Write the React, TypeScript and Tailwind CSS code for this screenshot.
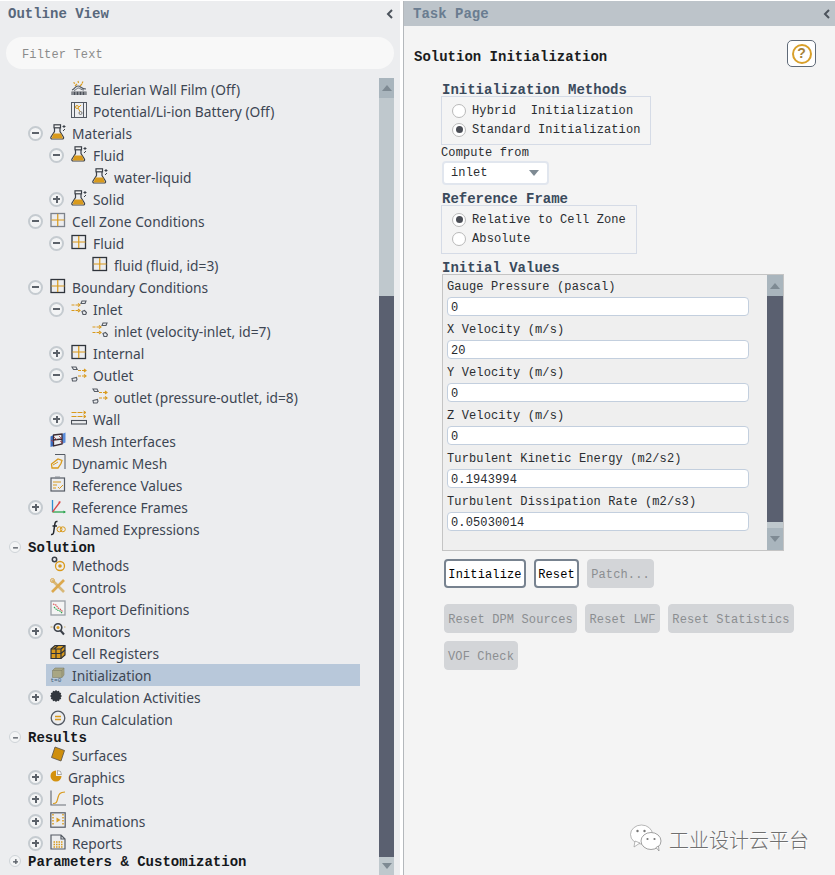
import React from 'react';

const mono = "font-['Liberation_Mono',monospace]";
const O = '#d99a1c';
const D = '#3b4048';

function Svg({ children, className = 'w-4 h-4' }: { children: React.ReactNode; className?: string }) {
  return (
    <svg viewBox="0 0 16 16" fill="none" className={className}>
      {children}
    </svg>
  );
}

function Flask() {
  return (
    <Svg>
      <rect x="4" y="0.800" width="6.500" height="3" fill="#f4f4f4" stroke={D} strokeWidth="1.200" />
      <path d="M4.500 4v3.500L1 13c-.5 1 .1 2 1.200 2h10c1.100 0 1.700-1 1.200-2L10 7.500V4" stroke={D} strokeWidth="1.200" />
      <path d="M3.500 9.500h7.500L13 14.500H1.500z" fill={O} />
      <path d="M12.500 2.500h3M14 1v3M13 7l2-2" stroke={D} strokeWidth="1" />
    </Svg>
  );
}

function Grid({ dark }: { dark?: boolean }) {
  return (
    <Svg>
      <rect x="1" y="1.500" width="13.500" height="13" stroke={dark ? '#2f343b' : '#7d838b'} strokeWidth="1.300" />
      <path d="M7.750 2v12M1.500 8h13" stroke={O} strokeWidth="1.200" />
    </Svg>
  );
}

function Inlet() {
  return (
    <Svg>
      <path d="M0.500 5h8M0.500 10.500h8" stroke={O} strokeWidth="1.200" strokeDasharray="3 1" />
      <path d="M7 3.500L9 5 7 6.500M7 9L9 10.500 7 12" stroke={O} strokeWidth="1.100" />
      <path d="M10 3.500l1-2.500h4l-1 2.500zM11 11.500l2.500-1 2 2-.8 2H12z" stroke="#555b64" strokeWidth="1.100" />
    </Svg>
  );
}

function Outlet() {
  return (
    <Svg>
      <path d="M7 4.500h8M7 10h8" stroke={O} strokeWidth="1.200" strokeDasharray="3 1" />
      <path d="M13 3l2 1.500L13 6M13 8.500l2 1.500-2 1.500" stroke={O} strokeWidth="1.100" />
      <path d="M1 1h4l1.200 2.500H2.500zM1 12.500l4.500-1 .5 2-1 1.500H1.500z" stroke="#555b64" strokeWidth="1.100" />
    </Svg>
  );
}

function Wall() {
  return (
    <Svg>
      <path d="M0.500 2.500h14M0.500 6.500h14" stroke={O} strokeWidth="1.200" strokeDasharray="5 1" />
      <path d="M12.500 1L15 2.500 12.500 4M12.500 5L15 6.500 12.500 8" stroke={O} strokeWidth="1" />
      <rect x="0.500" y="10.500" width="15" height="3.500" stroke="#4a4f57" strokeWidth="1.100" />
    </Svg>
  );
}

function Film() {
  return (
    <Svg>
      <path d="M2.500 2.500l1.500 1M7 1l.5 2M12 1.500l-1 2M4 6l2-2M9 6l2-2" stroke={O} strokeWidth="1.100" />
      <path d="M1 10c3-1 3-4 6-4s3 3 8 3" stroke="#555b64" strokeWidth="1.200" />
      <path d="M3 10.500c2-.5 3-2.500 4.500-2.500S10 10 13 10" stroke="#555b64" strokeWidth="0.900" />
      <rect x="0.500" y="11.500" width="15" height="3.500" fill="#4a4f57" />
      <path d="M2 11.500V15M5 11.500V15M8 11.500V15M11 11.500V15M14 11.500V15" stroke="#dfe1e3" strokeWidth="0.800" />
    </Svg>
  );
}

function Battery() {
  return (
    <Svg>
      <rect x="0.500" y="0.500" width="15" height="15" stroke="#555b64" />
      <path d="M3.500 1v14M12.500 1v14" stroke="#555b64" />
      <circle cx="6" cy="5" r="1.500" stroke={O} />
      <circle cx="9.500" cy="11" r="1.500" stroke="#777" />
      <path d="M7 6l2 3.500M10 3l-2 2" stroke={O} />
    </Svg>
  );
}

function MeshIf() {
  return (
    <Svg>
      <path d="M0.500 4.500l3-1.500v11l-3 1z" fill="#3c6fc4" />
      <path d="M12 2l3.500-1.500v10L12 12z" fill="#5b8ddc" />
      <path d="M3.500 3l8.500-1v10l-8.500 2zM3.500 8l8.500-1" stroke="#3a2c34" strokeWidth="1.300" />
      <path d="M1 8l3 2M4 5l3 3M9 4l3 3M10 9l3 2" stroke="#a8323a" strokeWidth="0.800" />
    </Svg>
  );
}

function DynMesh() {
  return (
    <Svg>
      <path d="M5 0.500h10v14.500" stroke="#555b64" />
      <path d="M1.500 10L8 5l4 1.500-1 3L8 14H2z" stroke={O} strokeWidth="1.300" />
      <path d="M3 11l5-3" stroke={O} />
    </Svg>
  );
}

function RefValues() {
  return (
    <Svg>
      <rect x="1" y="2" width="13.500" height="13" stroke="#555b64" strokeWidth="1.200" />
      <rect x="5" y="0.500" width="5" height="2.500" fill="#8a8f96" />
      <path d="M3 6h8M3 9h4M3 12h3" stroke={O} />
      <path d="M8 11l1.500 1.500L13 9" stroke={O} />
    </Svg>
  );
}

function Frames() {
  return (
    <Svg>
      <path d="M2.500 14V2" stroke="#2f8fd0" strokeWidth="1.300" />
      <path d="M2.500 14H15" stroke="#2ca44e" strokeWidth="1.300" />
      <path d="M2.500 14L10 4" stroke="#d94a4a" strokeWidth="1.300" />
      <path d="M10.500 3L8 4l2 1.500z" fill="#d94a4a" />
      <path d="M13.500 12.500L16 14l-2.500 1.500z" fill="#2ca44e" />
    </Svg>
  );
}

function Fx() {
  return (
    <Svg>
      <path d="M7.500 1.500C5.500 1 5 2.500 4.700 5L3.700 12c-.2 1.800-.9 2.800-2.700 2.500M2.500 6h4.500" stroke="#23272d" strokeWidth="1.500" />
      <circle cx="9.500" cy="9.300" r="2.500" stroke={O} />
      <circle cx="12.800" cy="9.300" r="2.500" stroke={O} />
    </Svg>
  );
}

function Methods() {
  return (
    <Svg>
      <circle cx="4.500" cy="3.500" r="2.200" stroke={D} strokeWidth="1.500" />
      <circle cx="10" cy="10" r="4.500" stroke={O} strokeWidth="1.300" />
      <circle cx="10" cy="10" r="1.800" fill={O} />
    </Svg>
  );
}

function Controls() {
  return (
    <Svg>
      <path d="M2 2l12 12" stroke="#d8b878" strokeWidth="2.600" />
      <path d="M14 2L2 14" stroke="#dca94e" strokeWidth="2.600" />
      <circle cx="2.500" cy="2.500" r="2" stroke="#dca94e" />
    </Svg>
  );
}

function ReportDefs() {
  return (
    <Svg>
      <rect x="1" y="1" width="14" height="14" fill="#f4f4f4" stroke="#9aa0a7" strokeWidth="1.300" />
      <path d="M3 4l3 1 2 3 2 1 3 3" stroke="#d94a4a" strokeWidth="1.100" strokeDasharray="1.500 .7" />
      <path d="M4 7l3 3 3 1 2 2" stroke="#2ca44e" strokeWidth="1.100" strokeDasharray="1.500 .7" />
    </Svg>
  );
}

function Monitor() {
  return (
    <Svg>
      <path d="M0.500 5h2M14 5h1.500" stroke="#c9ac6a" />
      <circle cx="8" cy="5.500" r="3.800" stroke={D} strokeWidth="1.600" />
      <circle cx="8" cy="5.500" r="1.500" fill={O} />
      <path d="M10.500 8.500L14 12.500" stroke={D} strokeWidth="2" />
    </Svg>
  );
}

function CellReg() {
  return (
    <Svg>
      <path d="M1 5l4-3.500h10V11l-4 3.500H1z" fill={O} stroke="#2f343b" strokeWidth="1.200" />
      <path d="M1 5h10v9.500M11 5l4-3.500M1 9.500h10M6 5v9.500M11 9.500l4-3.500M8 1.500L4 5" stroke="#2f343b" strokeWidth="1.200" />
    </Svg>
  );
}

function Init() {
  return (
    <svg viewBox="0 0 16 16" fill="none" className="w-4 h-4 overflow-visible">
      <path d="M2.500 3.500L5 1h9v7l-2 2.500H2.500z" fill="#a8a683" stroke="#7f8068" strokeWidth="0.600" />
      <path d="M2.500 3.500H12v7M12 3.500L14 1" stroke="#7f8068" strokeWidth="0.600" />
      <text x="0.500" y="15" fontSize="6" fill="#3d5c78" fontFamily="Liberation Mono, monospace">t=0</text>
    </svg>
  );
}

function Gear() {
  return (
    <svg viewBox="0 0 12 12" className="w-3 h-3">
      <path d="M6 0l1.300 1.300L9 .8l.5 1.700 1.700.5-.5 1.700L12 6l-1.300 1.300.5 1.700-1.700.5L9 11.200l-1.700-.5L6 12l-1.300-1.300-1.700.5-.5-1.700-1.700-.5.5-1.700L0 6l1.300-1.300L.8 3l1.700-.5L3 .8l1.700.5z" fill="#33383f" />
    </svg>
  );
}

function Run() {
  return (
    <Svg>
      <circle cx="8" cy="8" r="6.800" stroke="#555b64" strokeWidth="1.300" />
      <path d="M5 6.500h6M5 9.500h6" stroke={O} strokeWidth="1.400" />
    </Svg>
  );
}

function Surface() {
  return (
    <Svg>
      <path d="M5 1l9.500 3.500L11 15 1.500 11.500z" fill="#cf8f0d" stroke="#55504a" strokeWidth="0.800" strokeLinejoin="round" />
    </Svg>
  );
}

function Pie() {
  return (
    <svg viewBox="0 0 12 12" className="w-3 h-3">
      <path d="M6 .5V6h5.500A5.500 5.500 0 1 1 6 .5z" fill="#d4920f" />
      <path d="M7.500 .5a4 4 0 0 1 4 4h-4z" fill="#fff" stroke="#777" strokeWidth="0.600" />
    </svg>
  );
}

function Plot() {
  return (
    <Svg>
      <path d="M1 0.500V15h15" stroke="#6a7078" strokeWidth="1.200" />
      <path d="M3 13.500c4 0 4-2 5-6s2-5 7-5.500" stroke={O} strokeWidth="1.200" />
    </Svg>
  );
}

function Anim() {
  return (
    <Svg>
      <rect x="0.800" y="0.800" width="14.400" height="14.400" stroke="#555b64" strokeWidth="1.200" />
      <path d="M3 2v12M13 2v12" stroke={O} strokeWidth="1.500" strokeDasharray="1.500 1.500" />
      <path d="M6.500 5.500l4 2.500-4 2.500z" fill={O} />
    </Svg>
  );
}

function ReportIcon() {
  return (
    <Svg>
      <path d="M1 1h10l4 4v10H1zM11 1v4h4" stroke="#555b64" strokeWidth="1.200" />
      <path d="M3.500 8h9M3.500 10.500h9M3.500 13h9" stroke={O} strokeWidth="1.300" strokeDasharray="1.500 1" />
    </Svg>
  );
}

function Expander({ open, small }: { open: boolean; small?: boolean }) {
  return (
    <span
      className={`flex shrink-0 items-center justify-center rounded-full bg-[#f3f4f5] ${small ? 'w-3 h-3 border-[1.5px] border-[#cfd4d8]' : 'w-[15px] h-[15px] border-2 border-[#c5cbd0]'}`}
    >
      <span className={`relative block w-[7px] h-[7px] ${small ? 'scale-[0.7]' : ''}`}>
        <span className="absolute left-0 top-[2.5px] w-[7px] h-[2px] bg-[#5c626a]" />
        {!open && <span className="absolute left-[2.5px] top-0 w-[2px] h-[7px] bg-[#5c626a]" />}
      </span>
    </span>
  );
}

const levelPad: Record<number, string> = {
  1: 'pl-[28px]',
  2: 'pl-[49px]',
  3: 'pl-[70px]',
};

type RowProps = {
  level: number;
  label: string;
  icon: React.ReactNode;
  open?: boolean;
  tight?: boolean;
};

function Row({ level, label, icon, open, tight }: RowProps) {
  return (
    <div className={`flex h-[22px] items-center ${levelPad[level]}`}>
      <span className="flex w-[15px] shrink-0 items-center">
        {open !== undefined && <Expander open={open} />}
      </span>
      <span className={`ml-[7px] flex shrink-0 items-center -translate-y-px ${tight ? 'w-3' : 'w-4'}`}>{icon}</span>
      <span className="ml-[6px] whitespace-nowrap pt-[2px]">{label}</span>
    </div>
  );
}

function Section({ label, open }: { label: string; open: boolean }) {
  return (
    <div className="flex h-[14px] items-center pl-[9px]">
      <Expander open={open} small />
      <span className={`ml-[7px] whitespace-nowrap pt-[2px] text-[14px] font-bold text-[#15181c] ${mono}`}>{label}</span>
    </div>
  );
}

function Chevron() {
  return (
    <svg viewBox="0 0 8 10" className="w-2 h-2.5">
      <path d="M6 1L2 5l4 4" fill="none" stroke="#4c535c" strokeWidth="2" />
    </svg>
  );
}

function ScrollArrow({ up }: { up?: boolean }) {
  return (
    <svg viewBox="0 0 10 6" className="w-2.5 h-1.5">
      <path d={up ? 'M0 6l5-6 5 6z' : 'M0 0l5 6 5-6z'} fill="#7e8a93" />
    </svg>
  );
}

function Radio({ checked, label }: { checked?: boolean; label: string }) {
  return (
    <div className="flex h-[19px] items-center">
      <span className="flex w-[14px] h-[14px] items-center justify-center rounded-full border border-[#b9b9b9] bg-white">
        {checked && <span className="w-[7px] h-[7px] rounded-full bg-[#4a4d55]" />}
      </span>
      <span className="ml-[6px] whitespace-pre">{label}</span>
    </div>
  );
}

function Field({ label, value }: { label: string; value: string }) {
  return (
    <div className="mb-[4px]">
      <div className="flex h-[19px] items-center whitespace-nowrap">{label}</div>
      <div className="mt-[1px] flex w-[302px] h-[19px] items-center rounded-[4px] border border-[#c3cfde] bg-white pl-[3px] pt-[2px] text-[#26292d]">
        {value}
      </div>
    </div>
  );
}

function Btn({ label, width, on }: { label: string; width: string; on?: boolean }) {
  return (
    <div
      className={`flex h-[29px] items-center justify-center rounded-[4px] whitespace-nowrap pt-[2px] ${width} ${
        on ? 'border-2 border-[#77828f] bg-white text-black' : 'border border-[#d3d5d8] bg-[#d3d5d8] text-[#8b8e91]'
      }`}
    >
      {label}
    </div>
  );
}

const fields = [
  ['Gauge Pressure (pascal)', '0'],
  ['X Velocity (m/s)', '20'],
  ['Y Velocity (m/s)', '0'],
  ['Z Velocity (m/s)', '0'],
  ['Turbulent Kinetic Energy (m2/s2)', '0.1943994'],
  ['Turbulent Dissipation Rate (m2/s3)', '0.05030014'],
];

export default function App() {
  return (
    <div className="relative flex w-[835px] h-[875px] overflow-hidden bg-white pt-px">
      {/* Outline View */}
      <div className="flex w-[400px] flex-col bg-[#ecedef] pr-[6px]">
        <div className="flex h-[25px] items-center justify-between pl-[8px]">
          <span className={`pt-[2px] text-[14px] font-bold text-[#58687c] ${mono}`}>Outline View</span>
          <Chevron />
        </div>
        <div
          className={`ml-[6px] mt-[11px] flex h-[32px] items-center rounded-full bg-[#f8f8f8] pl-[16px] pt-[4px] text-[12px] tracking-[0.15px] text-[#8b8b8b] ${mono}`}
        >
          Filter Text
        </div>
        <div className="mt-[9px] flex min-h-0 flex-1">
          <div className="min-w-0 flex-1 font-['Noto_Sans',sans-serif] text-[13.75px] text-[#3d4653]">
            <Row level={2} label="Eulerian Wall Film (Off)" icon={<Film />} />
            <Row level={2} label="Potential/Li-ion Battery (Off)" icon={<Battery />} />
            <Row level={1} label="Materials" icon={<Flask />} open />
            <Row level={2} label="Fluid" icon={<Flask />} open />
            <Row level={3} label="water-liquid" icon={<Flask />} />
            <Row level={2} label="Solid" icon={<Flask />} open={false} />
            <Row level={1} label="Cell Zone Conditions" icon={<Grid />} open />
            <Row level={2} label="Fluid" icon={<Grid dark />} open />
            <Row level={3} label="fluid (fluid, id=3)" icon={<Grid dark />} />
            <Row level={1} label="Boundary Conditions" icon={<Grid dark />} open />
            <Row level={2} label="Inlet" icon={<Inlet />} open />
            <Row level={3} label="inlet (velocity-inlet, id=7)" icon={<Inlet />} />
            <Row level={2} label="Internal" icon={<Grid dark />} open={false} />
            <Row level={2} label="Outlet" icon={<Outlet />} open />
            <Row level={3} label="outlet (pressure-outlet, id=8)" icon={<Outlet />} />
            <Row level={2} label="Wall" icon={<Wall />} open={false} />
            <Row level={1} label="Mesh Interfaces" icon={<MeshIf />} />
            <Row level={1} label="Dynamic Mesh" icon={<DynMesh />} />
            <Row level={1} label="Reference Values" icon={<RefValues />} />
            <Row level={1} label="Reference Frames" icon={<Frames />} open={false} />
            <Row level={1} label="Named Expressions" icon={<Fx />} />
            <Section label="Solution" open />
            <Row level={1} label="Methods" icon={<Methods />} />
            <Row level={1} label="Controls" icon={<Controls />} />
            <Row level={1} label="Report Definitions" icon={<ReportDefs />} />
            <Row level={1} label="Monitors" icon={<Monitor />} open={false} />
            <Row level={1} label="Cell Registers" icon={<CellReg />} />
            <div className="ml-[46px] flex h-[22px] w-[314px] items-center bg-[#b8c8da] pl-[4px]">
              <span className="flex w-4 shrink-0 items-center">
                <Init />
              </span>
              <span className="ml-[6px] whitespace-nowrap pt-[2px]">Initialization</span>
            </div>
            <Row level={1} label="Calculation Activities" icon={<Gear />} open={false} tight />
            <Row level={1} label="Run Calculation" icon={<Run />} />
            <Section label="Results" open />
            <Row level={1} label="Surfaces" icon={<Surface />} />
            <Row level={1} label="Graphics" icon={<Pie />} open={false} tight />
            <Row level={1} label="Plots" icon={<Plot />} open={false} />
            <Row level={1} label="Animations" icon={<Anim />} open={false} />
            <Row level={1} label="Reports" icon={<ReportIcon />} open={false} />
            <Section label="Parameters & Customization" open={false} />
          </div>
          <div className="flex w-[15px] shrink-0 flex-col bg-[#bfc8cd]">
            <div className="flex h-[20px] items-center justify-center bg-[#a9b5bd]">
              <ScrollArrow up />
            </div>
            <div className="h-[198px]" />
            <div className="flex-1 bg-[#5a6070]" />
            <div className="flex h-[18px] items-center justify-center">
              <ScrollArrow />
            </div>
          </div>
        </div>
      </div>

      {/* Task Page */}
      <div className="ml-[3px] flex min-w-0 flex-1 flex-col border-l border-[#b4b8bc] bg-[#f4f4f4]">
        <div className="flex h-[25px] items-center justify-between bg-[#bdc4ca] pl-[9px] pr-[4px]">
          <span className={`pt-[2px] text-[14px] font-bold text-[#6a7c90] ${mono}`}>Task Page</span>
          <Chevron />
        </div>
        <div className={`text-[12px] tracking-[0.13px] text-[#2a2d31] ${mono}`}>
          <div className="mt-[14px] flex h-[27px] justify-between pl-[10px] pr-[19px]">
            <span className="pt-[7px] text-[14px] font-bold tracking-normal text-[#1a1c20]">Solution Initialization</span>
            <div className="flex w-[29px] h-[27px] items-center justify-center rounded-[5px] border border-[#5f6a78] bg-white">
              <span className="flex w-[20px] h-[20px] items-center justify-center rounded-full border-2 border-[#d9a02a] font-['Liberation_Sans',sans-serif] text-[14px] font-bold text-[#a5823a]">
                ?
              </span>
            </div>
          </div>

          <div className="pl-[37px]">
            <div className="mt-[15px] flex h-[14px] items-center pl-[1px] pt-[2px] text-[14px] font-bold tracking-normal text-[#3a4a5c]">
              Initialization Methods
            </div>
            <div className="h-[49px] w-[210px] border border-[#d5dbe6] pl-[10px] pt-[4px]">
              <Radio label="Hybrid  Initialization" />
              <Radio checked label="Standard Initialization" />
            </div>
            <div className="flex h-[14px] items-center pt-[2px]">Compute from</div>
            <div className="ml-[1px] mt-[2px] flex h-[24px] w-[107px] items-center justify-between rounded-[4px] border-2 border-[#e1e6ee] bg-white pl-[7px] pr-[8px]">
              inlet
              <ScrollArrow />
            </div>
            <div className="mt-[6px] flex h-[14px] items-center pl-[1px] pt-[2px] text-[14px] font-bold tracking-normal text-[#3a4a5c]">
              Reference Frame
            </div>
            <div className="h-[49px] w-[196px] border border-[#d5dbe6] pl-[10px] pt-[4px]">
              <Radio checked label="Relative to Cell Zone" />
              <Radio label="Absolute" />
            </div>
            <div className="mt-[6px] flex h-[14px] items-center pl-[1px] pt-[2px] text-[14px] font-bold tracking-normal text-[#3a4a5c]">
              Initial Values
            </div>

            <div className="ml-[1px] flex h-[277px] w-[342px] border border-[#c4c4c4] bg-[#efefef]">
              <div className="min-w-0 flex-1 pl-[4px] pt-[2px]">
                {fields.map(([label, value]) => (
                  <Field key={label} label={label} value={value} />
                ))}
              </div>
              <div className="flex w-[16px] shrink-0 flex-col bg-[#bfc8cd]">
                <div className="flex h-[21px] items-center justify-center bg-[#a9b5bd]">
                  <ScrollArrow up />
                </div>
                <div className="flex-1 bg-[#5a6070]" />
                <div className="h-[6px]" />
                <div className="flex h-[22px] items-center justify-center bg-[#a9b5bd]">
                  <ScrollArrow />
                </div>
              </div>
            </div>

            <div className="ml-[3px] mt-[8px] flex gap-[8px]">
              <Btn on label="Initialize" width="w-[82px]" />
              <Btn on label="Reset" width="w-[45px]" />
              <Btn label="Patch..." width="w-[67px]" />
            </div>
            <div className="ml-[3px] mt-[16px] flex gap-[8px]">
              <Btn label="Reset DPM Sources" width="w-[133px]" />
              <Btn label="Reset LWF" width="w-[75px]" />
              <Btn label="Reset Statistics" width="w-[126px]" />
            </div>
            <div className="ml-[3px] mt-[8px] flex">
              <Btn label="VOF Check" width="w-[74px]" />
            </div>
          </div>
        </div>
      </div>

      {/* watermark */}
      <div className="absolute left-[630px] top-[824px] flex items-center">
        <svg viewBox="0 0 32 28" className="w-8 h-7">
          <ellipse cx="11.500" cy="10.500" rx="11" ry="9.500" fill="#fff" stroke="#9a9a9a" strokeWidth="0.700" />
          <path d="M5 17l-1 6 6-4z" fill="#fff" stroke="#9a9a9a" strokeWidth="0.700" />
          <ellipse cx="21" cy="17" rx="10" ry="8.500" fill="#fff" stroke="#8a8a8a" strokeWidth="0.800" />
          <path d="M26 23.500l3 3.500-.5-5z" fill="#fff" stroke="#8a8a8a" strokeWidth="0.700" />
          <circle cx="7.500" cy="7" r="1.200" fill="#777" />
          <circle cx="14.500" cy="7" r="1.200" fill="#777" />
          <circle cx="17.500" cy="15" r="1.100" fill="#777" />
          <circle cx="24.500" cy="15" r="1.100" fill="#777" />
        </svg>
        <span className="ml-[7px] mt-[3px] whitespace-nowrap font-['Noto_Sans_CJK_SC',sans-serif] text-[20px] font-light leading-none text-[#6f6f6f] [text-shadow:1px_1px_0_#fff]">
          工业设计云平台
        </span>
      </div>
    </div>
  );
}
